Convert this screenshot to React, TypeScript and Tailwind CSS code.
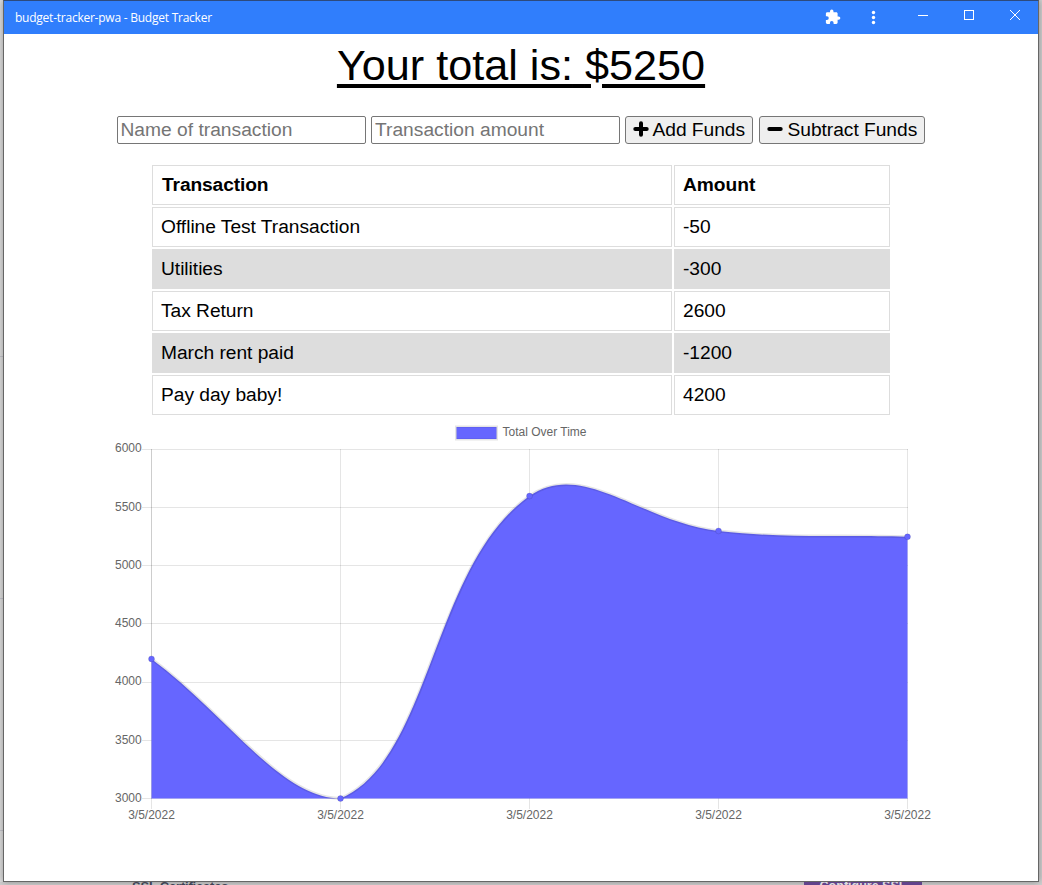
import React from "react";

const rows: [string, string][] = [
  ["Offline Test Transaction", "-50"],
  ["Utilities", "-300"],
  ["Tax Return", "2600"],
  ["March rent paid", "-1200"],
  ["Pay day baby!", "4200"],
];

const totals = [4200, 3000, 5600, 5300, 5250];
const TOP = 24.5;
const BOTTOM = 373.5;
const points = totals.map((v, i) => ({
  x: 51.5 + i * 189,
  y: BOTTOM - ((v - 3000) * (BOTTOM - TOP)) / 3000,
}));
const clamp = (y: number) => Math.max(TOP, Math.min(BOTTOM, y));

// Smooth line: each point's handles follow the chord between its neighbours.
const handles = points.map((cur, i) => {
  const prev = points[i - 1] ?? cur;
  const next = points[i + 1] ?? cur;
  const a = Math.hypot(cur.x - prev.x, cur.y - prev.y);
  const b = Math.hypot(next.x - cur.x, next.y - cur.y);
  const fa = (0.4 * a) / (a + b);
  const fb = (0.4 * b) / (a + b);
  const dx = next.x - prev.x;
  const dy = next.y - prev.y;
  return {
    before: `${cur.x - fa * dx} ${clamp(cur.y - fa * dy)}`,
    after: `${cur.x + fb * dx} ${clamp(cur.y + fb * dy)}`,
  };
});
const line =
  `M${points[0].x} ${points[0].y}` +
  points
    .slice(1)
    .map((p, i) => `C${handles[i].after} ${handles[i + 1].before} ${p.x} ${p.y}`)
    .join("");
const area = `${line}L${points[4].x} ${BOTTOM}L${points[0].x} ${BOTTOM}Z`;
const ticks = [
  { value: 6000, y: 24.5, baseline: 27 },
  { value: 5500, y: 82.5, baseline: 86 },
  { value: 5000, y: 140.5, baseline: 144 },
  { value: 4500, y: 198.5, baseline: 202 },
  { value: 4000, y: 257.5, baseline: 260 },
  { value: 3500, y: 315.5, baseline: 319 },
  { value: 3000, y: 373.5, baseline: 377 },
];

function Chart() {
  return (
    <svg width="842" height="410" viewBox="0 0 842 410" className="block font-['Liberation_Sans',sans-serif] text-[12px]">
      <g stroke="#000" strokeOpacity="0.1" strokeWidth="1">
        {ticks.map(({ y }) => (
          <path key={y} d={`M42 ${y}H808`} />
        ))}
        {points.map((p) => (
          <path key={p.x} d={`M${p.x} 24V384`} />
        ))}
        <path d="M51.5 24V374" />
      </g>
      <path d={area} fill="#66f" />
      <path d={line} fill="none" stroke="#000" strokeOpacity="0.1" strokeWidth="3" />
      {points.map((p) => (
        <circle key={p.x} cx={p.x} cy={p.y} r="3" fill="#66f" stroke="#000" strokeOpacity="0.1" />
      ))}
      <rect x="356.5" y="2" width="40" height="12" fill="#66f" />
      <rect x="356" y="1.500" width="41" height="13" fill="none" stroke="#000" strokeOpacity="0.1" strokeWidth="2" />
      <g fill="#666">
        <text x="402.5" y="11">Total Over Time</text>
        {ticks.map(({ value, baseline }) => (
          <text key={value} x="41.7" y={baseline} textAnchor="end">
            {value}
          </text>
        ))}
        {points.map((p) => (
          <text key={p.x} x={p.x} y="394" textAnchor="middle">3/5/2022</text>
        ))}
      </g>
    </svg>
  );
}

function TitleBar() {
  return (
    <header className="flex h-[33px] items-center bg-[#307efc] pl-[11px] text-white">
      <span className="grow pt-px font-['Open_Sans',sans-serif] text-[12px] tracking-[-0.24px]">budget-tracker-pwa - Budget Tracker</span>
      <svg width="220" height="33" viewBox="0 0 220 33" fill="none">
        <path
          transform="translate(6.5 7.8) scale(0.69)"
          fill="#fff"
          d="M20.5 11H19V7c0-1.100-.9-2-2-2h-4V3.500a2.500 2.500 0 0 0-5 0V5H4c-1.100 0-2 .9-2 2v3.800h1.500a2.700 2.700 0 0 1 0 5.400H2V20c0 1.100.9 2 2 2h3.800v-1.500a2.700 2.700 0 0 1 5.400 0V22H17c1.100 0 2-.9 2-2v-4h1.500a2.500 2.500 0 0 0 0-5z"
        />
        <g fill="#fff">
          <circle cx="55.500" cy="11.500" r="1.700" />
          <circle cx="55.500" cy="16.500" r="1.700" />
          <circle cx="55.500" cy="21.500" r="1.700" />
        </g>
        <g stroke="#fff">
          <path d="M100 14.500h10" />
          <rect x="146.500" y="9.500" width="9" height="9" />
          <path d="M192 9l10 10M202 9l-10 10" />
        </g>
      </svg>
    </header>
  );
}

export default function App() {
  return (
    <div className="flex h-[885px] w-[1042px] flex-col overflow-hidden bg-[#d0d0d0] font-['Liberation_Sans',Arial,sans-serif] text-black">
      <div className="flex h-[882px] shrink-0">
        <div className="flex w-[3px] flex-col bg-[#dedede] pt-[356px]">
          <div className="h-px bg-[#c4c4cc]" />
          <div className="mt-[241px] h-px bg-[#c4c4cc]" />
          <div className="mt-[231px] h-px bg-[#c4c4cc]" />
        </div>
        <main className="flex w-[1036px] flex-col border border-[#666] border-t-[#2d4a7c] bg-white shadow-[0_0_7px_rgba(0,0,0,0.35)]">
          <TitleBar />
          <h1 className="mt-[6px] h-[50px] text-center text-[43.2px] leading-[50px] underline decoration-[4px] underline-offset-[4px]">
            Your total is:{" "}
            <span className="relative">
              <span className="absolute bottom-0 left-[6px] h-[5px] w-[11px] bg-white" />$5250
            </span>
          </h1>
          <form className="mt-[26px] flex h-7 pl-[113px] text-[19.200px] tracking-[-0.03px]" onSubmit={(e) => e.preventDefault()}>
            <input className="mr-[5px] h-7 w-[249px] rounded-[2px] border border-[#767676] pt-px pr-[3px] pl-[2.500px] tracking-[0.01px] placeholder:text-[#757575]" placeholder="Name of transaction" />
            <input className="mr-[5px] h-7 w-[249px] rounded-[2px] border border-[#767676] pt-px pr-[3px] pl-[3px] tracking-[0.01px] placeholder:text-[#757575]" placeholder="Transaction amount" />
            <button className="mr-[6px] flex h-7 w-[128px] items-center rounded-[3px] border border-[#767676] bg-[#efefef] pl-[7px] whitespace-nowrap">
              <svg width="16" height="16" viewBox="0 0 16 16" className="mr-[3.500px] mb-[3px] shrink-0">
                <path d="M8 2.300V13.700M2.300 8H13.700" stroke="#000" strokeWidth="4" strokeLinecap="round" />
              </svg>
              <span className="pt-px">Add Funds</span>
            </button>
            <button className="flex h-7 w-[166px] items-center rounded-[3px] border border-[#767676] bg-[#efefef] pl-[6.500px] whitespace-nowrap">
              <svg width="16" height="16" viewBox="0 0 16 16" className="mr-[5px] mb-[3px] shrink-0">
                <path d="M2.300 8H13.700" stroke="#000" strokeWidth="4" strokeLinecap="round" />
              </svg>
              <span className="pt-px">Subtract Funds</span>
            </button>
          </form>
          <div className="mt-[21px] ml-[148px] grid w-[738px] grid-cols-[520px_216px] gap-[2px] text-[19.200px] tracking-[-0.03px]">
            <div className="h-10 border border-[#ddd] pl-[9px] leading-[37px] font-bold tracking-[-0.12px]">Transaction</div>
            <div className="h-10 border border-[#ddd] pl-2 leading-[37px] font-bold">Amount</div>
            {rows.map(([name, amount], i) => (
              <React.Fragment key={name}>
                <div className={`h-10 border border-[#ddd] pl-2 leading-[37px] ${i % 2 ? "bg-[#ddd]" : ""}`}>{name}</div>
                <div className={`h-10 border border-[#ddd] pl-2 leading-[37px] ${i % 2 ? "bg-[#ddd]" : ""}`}>{amount}</div>
              </React.Fragment>
            ))}
          </div>
          <div className="mt-[10px] ml-[96px]">
            <Chart />
          </div>
        </main>
      </div>
      <footer className="flex h-[3px] shrink-0 overflow-hidden font-bold">
        <span className="ml-[132px] w-[672px] text-[13px] leading-[9px] tracking-[-0.2px] text-[#3f4354]">SSL Certificates</span>
        <span className="h-5 w-[118px] bg-[#61438b] text-center text-[12.500px] leading-[9px] text-[#ddd]">Configure SSL</span>
      </footer>
    </div>
  );
}
